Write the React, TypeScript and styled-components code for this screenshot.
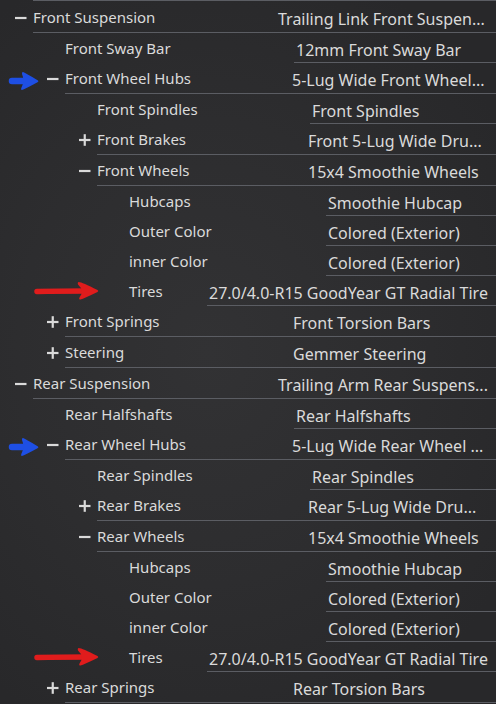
import React from "react";
import styled, { createGlobalStyle } from "styled-components";

const LINE = "#5b5d63";

const GlobalStyle = createGlobalStyle`
  html, body { margin: 0; padding: 0; background: #2b2b2d; }
  body { font-family: "Noto Sans", "Open Sans", sans-serif; }
  #root { width: 496px; height: 704px; overflow: hidden; }
`;

const Panel = styled.div`
  width: 496px;
  height: 704px;
  overflow: hidden;
  background: radial-gradient(ellipse 70% 60% at 42% 50%, #323234 0%, #2d2d2f 55%, #28282a 100%);
  color: #dadada;
  font-size: 15px;
  display: flex;
  flex-direction: column;
`;

const TopRule = styled.div`
  height: 1px;
  margin: 0 0 1px 33px;
  background: ${LINE};
  flex: none;
`;

const Row = styled.div<{ $group: boolean }>`
  position: relative;
  display: flex;
  flex: none;
  height: ${(p) => (p.$group ? 31 : 30)}px;
`;

const Toggle = styled.span<{ $depth: number }>`
  flex: none;
  width: 18px;
  margin-left: ${(p) => 15 + 32 * p.$depth}px;
  display: flex;
  align-items: center;
  padding-top: 1px;
  box-sizing: border-box;
  color: #dadada;
`;

const Main = styled.div<{ $group: boolean }>`
  flex: 1;
  min-width: 0;
  display: flex;
  border-bottom: ${(p) => (p.$group ? `1px solid ${LINE}` : "none")};
`;

const Label = styled.span<{ $w: number }>`
  flex: none;
  width: ${(p) => p.$w}px;
  display: flex;
  align-items: center;
  padding-top: 0px;
  box-sizing: border-box;
  white-space: nowrap;
`;

const Value = styled.span<{ $group: boolean }>`
  flex: 1;
  min-width: 0;
  display: flex;
  align-items: center;
  font-size: 16px;
  padding: 4px 0 0 2px;
  box-sizing: border-box;
  white-space: nowrap;
  overflow: hidden;
  border-bottom: ${(p) => (p.$group ? "none" : `1px solid ${LINE}`)};
`;

const BlueArrowSvg = styled.svg`
  position: absolute;
  left: 9px;
  top: 8px;
  width: 30px;
  height: 20px;
  overflow: visible;
`;

const RedArrowSvg = styled.svg`
  position: absolute;
  left: 34px;
  top: 4px;
  width: 66px;
  height: 20px;
  overflow: visible;
`;

const Sign = ({ kind }: { kind: "plus" | "minus" }) => (
  <svg width="12" height="12" viewBox="0 0 12 12">
    <path d="M0 6H11.5" stroke="currentColor" strokeWidth="2.2" />
    {kind === "plus" && <path d="M5.75 0.2V11.8" stroke="currentColor" strokeWidth="2.2" />}
  </svg>
);

const BlueArrow = () => (
  <BlueArrowSvg viewBox="0 0 30 20">
    <path d="M3 10 L18 10" stroke="#1e4fe4" strokeWidth="6.5" strokeLinecap="round" />
    <path d="M14 1 Q16 1.5 29 9.5 Q30 10.5 28.5 11.2 Q17 17.5 13 19 Q11.5 19 12.5 16.5 Q16 10 13 3 Q12.6 1 14 1 Z" fill="#1e4fe4" />
  </BlueArrowSvg>
);

const RedArrow = () => (
  <RedArrowSvg viewBox="0 0 66 20">
    <path d="M3 11.5 Q25 11 54 11" stroke="#e01c1c" strokeWidth="5.5" strokeLinecap="round" />
    <path d="M44.5 2 Q47 1.5 63.5 10 Q65 11 63.5 12 Q50 18.5 46.5 19.5 Q44.5 19.5 45.5 17.5 Q51 11 44 4.5 Q43.2 2.5 44.5 2 Z" fill="#e01c1c" />
  </RedArrowSvg>
);

type RowData = {
  label: string;
  depth: number;
  toggle?: "plus" | "minus";
  value: string;
  vx: number;
  arrow?: "blue" | "red";
};

const rows: RowData[] = [
  { label: "Front Suspension", depth: 0, toggle: "minus", value: "Trailing Link Front Suspen...", vx: 276 },
  { label: "Front Sway Bar", depth: 1, value: "12mm Front Sway Bar", vx: 294 },
  { label: "Front Wheel Hubs", depth: 1, toggle: "minus", value: "5-Lug Wide Front Wheel...", vx: 290, arrow: "blue" },
  { label: "Front Spindles", depth: 2, value: "Front Spindles", vx: 310 },
  { label: "Front Brakes", depth: 2, toggle: "plus", value: "Front 5-Lug Wide Dru...", vx: 306 },
  { label: "Front Wheels", depth: 2, toggle: "minus", value: "15x4 Smoothie Wheels", vx: 306 },
  { label: "Hubcaps", depth: 3, value: "Smoothie Hubcap", vx: 326 },
  { label: "Outer Color", depth: 3, value: "Colored (Exterior)", vx: 326 },
  { label: "inner Color", depth: 3, value: "Colored (Exterior)", vx: 326 },
  { label: "Tires", depth: 3, value: "27.0/4.0-R15 GoodYear GT Radial Tire", vx: 207, arrow: "red" },
  { label: "Front Springs", depth: 1, toggle: "plus", value: "Front Torsion Bars", vx: 291 },
  { label: "Steering", depth: 1, toggle: "plus", value: "Gemmer Steering", vx: 291 },
  { label: "Rear Suspension", depth: 0, toggle: "minus", value: "Trailing Arm Rear Suspens...", vx: 276 },
  { label: "Rear Halfshafts", depth: 1, value: "Rear Halfshafts", vx: 294 },
  { label: "Rear Wheel Hubs", depth: 1, toggle: "minus", value: "5-Lug Wide Rear Wheel ...", vx: 290, arrow: "blue" },
  { label: "Rear Spindles", depth: 2, value: "Rear Spindles", vx: 310 },
  { label: "Rear Brakes", depth: 2, toggle: "plus", value: "Rear 5-Lug Wide Dru...", vx: 306 },
  { label: "Rear Wheels", depth: 2, toggle: "minus", value: "15x4 Smoothie Wheels", vx: 306 },
  { label: "Hubcaps", depth: 3, value: "Smoothie Hubcap", vx: 326 },
  { label: "Outer Color", depth: 3, value: "Colored (Exterior)", vx: 326 },
  { label: "inner Color", depth: 3, value: "Colored (Exterior)", vx: 326 },
  { label: "Tires", depth: 3, value: "27.0/4.0-R15 GoodYear GT Radial Tire", vx: 207, arrow: "red" },
  { label: "Rear Springs", depth: 1, toggle: "plus", value: "Rear Torsion Bars", vx: 291 },
];

export default function App() {
  return (
    <>
      <GlobalStyle />
      <Panel>
        <TopRule />
        {rows.map((r, i) => {
          const group = !!r.toggle;
          const start = 33 + 32 * r.depth;
          return (
            <Row key={i} $group={group}>
              {r.arrow === "blue" && <BlueArrow />}
              {r.arrow === "red" && <RedArrow />}
              <Toggle $depth={r.depth}>{r.toggle && <Sign kind={r.toggle} />}</Toggle>
              <Main $group={group}>
                <Label $w={r.vx - start}>{r.label}</Label>
                <Value $group={group}>{r.value}</Value>
              </Main>
            </Row>
          );
        })}
      </Panel>
    </>
  );
}
